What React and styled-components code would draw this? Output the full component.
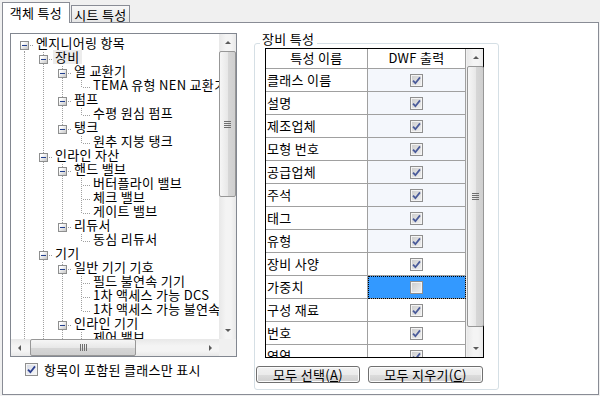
import React from 'react'
import styled, { createGlobalStyle, css } from 'styled-components'

const GlobalStyle = createGlobalStyle`
  body {
    margin: 0;
    background: #f0f0f0;
    font-family: "Noto Sans CJK KR", "Noto Sans", sans-serif;
    font-size: 13px;
    letter-spacing: 0.3px;
    color: #000;
  }
`

const Window = styled.div`
  width: 600px;
  height: 396px;
  box-sizing: border-box;
  padding: 2px 2px 0 2px;
`

const TabStrip = styled.div`
  display: flex;
  align-items: flex-end;
  height: 20px;
  position: relative;
  z-index: 1;
`

const Tab = styled.div`
  box-sizing: border-box;
  border: 1px solid #898c95;
  border-bottom: none;
  text-align: center;
  white-space: nowrap;
  ${p => p.active ? css`
    width: 68px;
    height: 21px;
    margin-bottom: -1px;
    background: #fff;
    line-height: 19px;
  ` : css`
    width: 59px;
    height: 17px;
    margin-left: 1px;
    background: linear-gradient(#f7f7f7, #e6e6e6);
    line-height: 17px;
  `}
`

const Panel = styled.div`
  width: 597px;
  height: 373px;
  box-sizing: border-box;
  border: 1px solid #898c95;
  background: #fff;
  display: flex;
  padding: 10px 0 0 7px;
`

const LeftCol = styled.div`
  width: 227px;
  display: flex;
  flex-direction: column;
`

const TreeBox = styled.div`
  width: 227px;
  height: 324px;
  box-sizing: border-box;
  border: 1px solid #828790;
  display: grid;
  grid-template-columns: 1fr 17px;
  grid-template-rows: 1fr 17px;
  background: #fff;
`

const TreeView = styled.div`
  overflow: hidden;
  padding-top: 4px;
`

const TreeRow = styled.div`
  display: flex;
  height: 14px;
  padding-left: 4px;
  white-space: nowrap;
`

const Guide = styled.div`
  flex: none;
  width: 19px;
  height: 14px;
  ${p => p.line && css`
    background: linear-gradient(#a0a0a0 50%, transparent 50%) 9px 0 / 1px 2px repeat-y;
  `}
`

const Node = styled.div`
  flex: none;
  width: 19px;
  height: 14px;
  position: relative;
  display: flex;
  align-items: center;
  padding-left: 5px;
  box-sizing: border-box;
  &::before {
    content: '';
    position: absolute;
    left: 9px;
    width: 1px;
    top: ${p => p.first ? 7 : 0}px;
    bottom: ${p => p.next ? 0 : 7}px;
    background: linear-gradient(#a0a0a0 50%, transparent 50%) 0 0 / 1px 2px repeat-y;
  }
  &::after {
    content: '';
    position: absolute;
    left: 10px;
    top: 7px;
    width: 9px;
    height: 1px;
    background: linear-gradient(to right, transparent 50%, #a0a0a0 50%) 0 0 / 2px 1px repeat-x;
  }
`

const Expander = styled.span`
  position: relative;
  z-index: 1;
  width: 9px;
  height: 9px;
  box-sizing: border-box;
  border: 1px solid #8e8f8f;
  background: linear-gradient(135deg, #ffffff 20%, #c6c6c6);
  display: flex;
  align-items: center;
  justify-content: center;
  &::after {
    content: '';
    width: 5px;
    height: 1px;
    background: #23408e;
  }
`

const Label = styled.span`
  height: 14px;
  margin-top: -2px;
  padding: 2px 2px 0;
  box-sizing: border-box;
  line-height: 9px;
  background: ${p => p.selected ? '#ececec' : 'transparent'};
`

const VScroll = styled.div`
  display: flex;
  flex-direction: column;
  background: linear-gradient(to right, #e8e8e8, #f4f4f4 40%, #f4f4f4 70%, #e8e8e8);
`

const HScroll = styled.div`
  display: flex;
  background: linear-gradient(#e8e8e8, #f4f4f4 40%, #f4f4f4 70%, #e8e8e8);
`

const Corner = styled.div`
  background: #f0f0f0;
`

const Arrow = styled.div`
  flex: none;
  width: 17px;
  height: 17px;
  display: flex;
  align-items: center;
  justify-content: center;
  &::after {
    content: '';
    width: 0;
    height: 0;
    ${p => p.dir === 'up' && css`
      border-left: 3px solid transparent;
      border-right: 3px solid transparent;
      border-bottom: 3px solid #5a5a5a;
    `}
    ${p => p.dir === 'down' && css`
      border-left: 3px solid transparent;
      border-right: 3px solid transparent;
      border-top: 3px solid #5a5a5a;
    `}
    ${p => p.dir === 'left' && css`
      border-top: 3px solid transparent;
      border-bottom: 3px solid transparent;
      border-right: 3px solid #5a5a5a;
    `}
    ${p => p.dir === 'right' && css`
      border-top: 3px solid transparent;
      border-bottom: 3px solid transparent;
      border-left: 3px solid #5a5a5a;
    `}
  }
`

const Track = styled.div`
  flex: 1;
  display: flex;
  flex-direction: ${p => p.horizontal ? 'row' : 'column'};
  min-height: 0;
  min-width: 0;
`

const Thumb = styled.div`
  flex: none;
  box-sizing: border-box;
  border: 1px solid #979797;
  border-radius: 2px;
  display: flex;
  align-items: center;
  justify-content: center;
  ${p => p.horizontal ? css`
    width: ${p.size}px;
    height: 17px;
    margin-left: ${p.offset || 0}px;
    background: linear-gradient(#f6f6f6, #e8e8e8 50%, #d7d7d7 51%, #cfcfcf);
  ` : css`
    height: ${p.size}px;
    width: 17px;
    margin-top: ${p.offset || 0}px;
    background: linear-gradient(to right, #f6f6f6, #e8e8e8 50%, #d7d7d7 51%, #cfcfcf);
  `}
`

const Grip = styled.span`
  width: 7px;
  height: 7px;
  background: ${p => p.horizontal
    ? 'repeating-linear-gradient(to right, #6f6f6f 0 1px, transparent 1px 2px)'
    : 'repeating-linear-gradient(#6f6f6f 0 1px, transparent 1px 2px)'};
`

const CheckRow = styled.label`
  display: flex;
  align-items: center;
  gap: 6px;
  margin-top: 6px;
  padding-left: 15px;
  line-height: 12px;
`

const Box = styled.span`
  flex: none;
  width: 13px;
  height: 13px;
  box-sizing: border-box;
  border: 1px solid #8f8f8f;
  display: flex;
  align-items: center;
  justify-content: center;
  box-shadow: inset 0 0 0 1px #f4f4f4;
  background: ${p => p.dim
    ? 'linear-gradient(135deg, #cbcbcb, #f2f2f2)'
    : 'linear-gradient(135deg, #d4d9e4, #fafafa)'};
`

const GroupBox = styled.div`
  position: relative;
  width: 245px;
  height: 347px;
  box-sizing: border-box;
  margin: 10px 0 0 17px;
  border: 1px solid #d5dfe5;
  border-radius: 3px;
  padding: 4px 0 0 1px;
`

const Legend = styled.span`
  position: absolute;
  top: -12px;
  left: 5px;
  padding: 0 3px 0 2px;
  background: #fff;
  line-height: 14px;
`

const Grid = styled.div`
  margin-left: 9px;
  width: 219px;
  height: 310px;
  box-sizing: border-box;
  border: 1px solid #000;
  display: flex;
  background: #fff;
`

const Table = styled.div`
  width: 200px;
  overflow: hidden;
  display: flex;
  flex-direction: column;
`

const Row = styled.div`
  display: flex;
  flex: none;
  height: ${p => p.head ? 20 : 23}px;
`

const Cell = styled.div`
  width: ${p => p.w}px;
  flex: none;
  box-sizing: border-box;
  border-right: 1px solid #a0a0a0;
  border-bottom: 1px solid #a0a0a0;
  line-height: ${p => p.head ? 18 : 21}px;
  white-space: nowrap;
  overflow: hidden;
  ${p => p.center ? css`
    display: flex;
    align-items: center;
    justify-content: center;
  ` : css`
    padding-left: 1px;
  `}
  ${p => p.head && css`text-align: center; display: block; padding: 0;`}
  background: ${p => p.sel ? '#3399ff' : p.shade ? '#f4f7fc' : '#fff'};
  ${p => p.sel && css`
    outline: 1px dotted #000;
    outline-offset: -1px;
  `}
`

const GridScroll = styled(VScroll)`
  width: 17px;
  border-left: 1px solid #f0f0f0;
  box-sizing: border-box;
`

const Buttons = styled.div`
  display: flex;
  gap: 8px;
  margin-top: 8px;
`

const Button = styled.button`
  width: ${p => p.w}px;
  height: 17px;
  padding: 0;
  box-sizing: border-box;
  border: 1px solid #707070;
  border-radius: 3px;
  box-shadow: inset 0 0 0 1px #fbfbfb;
  background: linear-gradient(#f2f2f2, #ebebeb 50%, #dddddd 51%, #cfcfcf);
  font: 13px "Noto Sans CJK KR", sans-serif;
  letter-spacing: 0.3px;
  line-height: 14px;
  color: #000;
  u { text-decoration: underline; }
`

const tree = [
  ['엔지니어링 항목', 0, true],
  ['장비', 1, true],
  ['열 교환기', 2, true],
  ['TEMA 유형 NEN 교환기', 3],
  ['펌프', 2, true],
  ['수평 원심 펌프', 3],
  ['탱크', 2, true],
  ['원추 지붕 탱크', 3],
  ['인라인 자산', 1, true],
  ['핸드 밸브', 2, true],
  ['버터플라이 밸브', 3],
  ['체크 밸브', 3],
  ['게이트 밸브', 3],
  ['리듀서', 2, true],
  ['동심 리듀서', 3],
  ['기기', 1, true],
  ['일반 기기 기호', 2, true],
  ['필드 불연속 기기', 3],
  ['1차 액세스 가능 DCS', 3],
  ['1차 액세스 가능 불연속 기기', 3],
  ['인라인 기기', 2, true],
  ['제어 밸브', 3],
  ['안전 밸브', 3],
  ['계기 루프', 2],
  ['배관', 1],
  ['구조', 0],
].map(([label, level, parent]) => ({ label, level, parent: !!parent }))

// does node i have a later sibling at its own level
const hasNext = i => {
  const lv = tree[i].level
  for (let j = i + 1; j < tree.length; j++) {
    if (tree[j].level < lv) return false
    if (tree[j].level === lv) return true
  }
  return false
}

const rows = (() => {
  const stack = []
  return tree.map((n, i) => {
    stack[n.level] = hasNext(i)
    return { ...n, guides: stack.slice(0, n.level), next: stack[n.level], first: i === 0 }
  })
})()

const props = [
  '클래스 이름', '설명', '제조업체', '모형 번호', '공급업체', '주석', '태그', '유형',
  '장비 사양', '가중치', '구성 재료', '번호', '영역',
]

const Check = ({ checked, dim }) => (
  <Box dim={dim}>
    {checked && (
      <svg width="9" height="9" viewBox="0 0 9 9">
        <path d="M1 4.6 L3.4 7.2 L8 1.4" fill="none" stroke={dim ? '#4a5b9a' : '#2c3f8f'} strokeWidth="1.8" />
      </svg>
    )}
  </Box>
)

export default function App() {
  return (
    <Window>
      <GlobalStyle />
      <TabStrip>
        <Tab active>객체 특성</Tab>
        <Tab>시트 특성</Tab>
      </TabStrip>
      <Panel>
        <LeftCol>
          <TreeBox>
            <TreeView>
              {rows.map((r, i) => (
                <TreeRow key={i}>
                  {r.guides.map((g, a) => <Guide key={a} line={g} />)}
                  <Node first={r.first} next={r.next}>
                    {r.parent && <Expander />}
                  </Node>
                  <Label selected={i === 1}>{r.label}</Label>
                </TreeRow>
              ))}
            </TreeView>
            <VScroll>
              <Arrow dir="up" />
              <Track>
                <Thumb size={146}><Grip /></Thumb>
              </Track>
              <Arrow dir="down" />
            </VScroll>
            <HScroll>
              <Arrow dir="left" />
              <Track horizontal>
                <Thumb horizontal size={106} offset={2}><Grip horizontal /></Thumb>
              </Track>
              <Arrow dir="right" />
            </HScroll>
            <Corner />
          </TreeBox>
          <CheckRow>
            <Check checked />
            항목이 포함된 클래스만 표시
          </CheckRow>
        </LeftCol>
        <GroupBox>
          <Legend>장비 특성</Legend>
          <Grid>
            <Table>
              <Row head>
                <Cell head w={102}>특성 이름</Cell>
                <Cell head w={98}>DWF 출력</Cell>
              </Row>
              {props.map((p, i) => (
                <Row key={p}>
                  <Cell w={102}>{p}</Cell>
                  <Cell w={98} center shade={i < 8} sel={i === 9}>
                    <Check dim checked={i !== 9} />
                  </Cell>
                </Row>
              ))}
            </Table>
            <GridScroll>
              <Arrow dir="up" />
              <Track>
                <Thumb size={261}><Grip /></Thumb>
              </Track>
              <Arrow dir="down" />
            </GridScroll>
          </Grid>
          <Buttons>
            <Button w={104}>모두 선택(<u>A</u>)</Button>
            <Button w={115}>모두 지우기(<u>C</u>)</Button>
          </Buttons>
        </GroupBox>
      </Panel>
    </Window>
  )
}
